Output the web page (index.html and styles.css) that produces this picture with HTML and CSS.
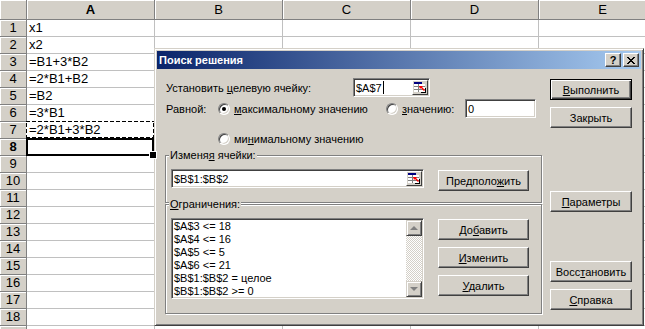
FILE: index.html
```html
<!DOCTYPE html>
<html lang="ru">
<head>
    <meta charset="UTF-8">
    <meta name="viewport" content="width=device-width, initial-scale=1.0">
    <title>Поиск решения</title>
    <link rel="stylesheet" href="styles.css">
</head>
<body>

    <div class="sheet">
        <div class="corner"></div>
        <div class="col-head active">A</div><div class="col-head">B</div><div class="col-head">C</div><div class="col-head">D</div><div class="col-head">E</div>

        <div class="row-head">1</div><div class="cell">x1</div><div class="cell"></div><div class="cell"></div><div class="cell"></div><div class="cell"></div>
        <div class="row-head">2</div><div class="cell">x2</div><div class="cell"></div><div class="cell"></div><div class="cell"></div><div class="cell"></div>
        <div class="row-head">3</div><div class="cell">=B1+3*B2</div><div class="cell"></div><div class="cell"></div><div class="cell"></div><div class="cell"></div>
        <div class="row-head">4</div><div class="cell">=2*B1+B2</div><div class="cell"></div><div class="cell"></div><div class="cell"></div><div class="cell"></div>
        <div class="row-head">5</div><div class="cell">=B2</div><div class="cell"></div><div class="cell"></div><div class="cell"></div><div class="cell"></div>
        <div class="row-head">6</div><div class="cell">=3*B1</div><div class="cell"></div><div class="cell"></div><div class="cell"></div><div class="cell"></div>
        <div class="row-head">7</div><div class="cell copied">=2*B1+3*B2</div><div class="cell"></div><div class="cell"></div><div class="cell"></div><div class="cell"></div>
        <div class="row-head active">8</div><div class="cell selected"></div><div class="cell"></div><div class="cell"></div><div class="cell"></div><div class="cell"></div>
        <div class="row-head">9</div><div class="cell"></div><div class="cell"></div><div class="cell"></div><div class="cell"></div><div class="cell"></div>
        <div class="row-head">10</div><div class="cell"></div><div class="cell"></div><div class="cell"></div><div class="cell"></div><div class="cell"></div>
        <div class="row-head">11</div><div class="cell"></div><div class="cell"></div><div class="cell"></div><div class="cell"></div><div class="cell"></div>
        <div class="row-head">12</div><div class="cell"></div><div class="cell"></div><div class="cell"></div><div class="cell"></div><div class="cell"></div>
        <div class="row-head">13</div><div class="cell"></div><div class="cell"></div><div class="cell"></div><div class="cell"></div><div class="cell"></div>
        <div class="row-head">14</div><div class="cell"></div><div class="cell"></div><div class="cell"></div><div class="cell"></div><div class="cell"></div>
        <div class="row-head">15</div><div class="cell"></div><div class="cell"></div><div class="cell"></div><div class="cell"></div><div class="cell"></div>
        <div class="row-head">16</div><div class="cell"></div><div class="cell"></div><div class="cell"></div><div class="cell"></div><div class="cell"></div>
        <div class="row-head">17</div><div class="cell"></div><div class="cell"></div><div class="cell"></div><div class="cell"></div><div class="cell"></div>
        <div class="row-head">18</div><div class="cell"></div><div class="cell"></div><div class="cell"></div><div class="cell"></div><div class="cell"></div>
        <div class="row-head"></div><div class="cell"></div><div class="cell"></div><div class="cell"></div><div class="cell"></div><div class="cell"></div>
    </div>

    <div class="dialog">
        <div class="titlebar">
            <span class="title">Поиск решения</span>
            <div class="caption-btns">
                <span class="cap-btn">?</span>
                <span class="cap-btn">
                    <svg width="8" height="7" viewBox="0 0 8 7"><path d="M0 0h2v1H0zM6 0h2v1H6zM1 1h2v1H1zM5 1h2v1H5zM2 2h4v1H2zM3 3h2v1H3zM2 4h4v1H2zM1 5h2v1H1zM5 5h2v1H5zM0 6h2v1H0zM6 6h2v1H6z" fill="#000"/></svg>
                </span>
            </div>
        </div>

        <div class="dlg-body">
            <div class="main">
                <div class="row target">
                    <span class="lbl">Установить <u>ц</u>елевую ячейку:</span>
                    <div class="field ref">
                        <span>$A$7</span><span class="caret"></span>
                        <span class="picker">
                            <svg width="14" height="13" viewBox="0 0 14 13">
                                <rect x="1" y="1" width="8" height="2" fill="#000080"/>
                                <rect x="1" y="3" width="11" height="8" fill="#fff"/>
                                <path d="M1 5.5h11M1 8.5h11M5.5 3v8" stroke="#808080"/>
                                <path d="M6 5h4l-1 1 3 3-1 1-3-3-1 1z" fill="#f00"/>
                                <path d="M8 11.5h5M12.5 7v5" stroke="#000"/>
                            </svg>
                        </span>
                    </div>
                </div>

                <div class="row equal">
                    <span class="lbl">Равной:</span>
                    <span class="opt opt-max"><span class="radio on"></span><span><u>м</u>аксимальному значению</span></span>
                    <span class="opt opt-val"><span class="radio"></span><span><u>з</u>начению:</span></span>
                    <div class="field value">0</div>
                </div>

                <div class="row minimum">
                    <span class="opt"><span class="radio"></span><span>ми<u>н</u>имальному значению</span></span>
                </div>

                <div class="group changing">
                    <div class="group-title">Изменя<u>я</u> ячейки:</div>
                    <div class="group-row">
                        <div class="field cells">
                            <span>$B$1:$B$2</span>
                            <span class="picker">
                                <svg width="14" height="13" viewBox="0 0 14 13">
                                    <rect x="1" y="1" width="8" height="2" fill="#000080"/>
                                    <rect x="1" y="3" width="11" height="8" fill="#fff"/>
                                    <path d="M1 5.5h11M1 8.5h11M5.5 3v8" stroke="#808080"/>
                                    <path d="M6 5h4l-1 1 3 3-1 1-3-3-1 1z" fill="#f00"/>
                                    <path d="M8 11.5h5M12.5 7v5" stroke="#000"/>
                                </svg>
                            </span>
                        </div>
                        <div class="btn-col">
                            <button class="btn">Предполо<u>ж</u>ить</button>
                        </div>
                    </div>
                </div>

                <div class="group limits">
                    <div class="group-title"><u>О</u>граничения:</div>
                    <div class="group-row">
                        <div class="listbox">
                            <ul class="items">
                                <li>$A$3 &lt;= 18</li>
                                <li>$A$4 &lt;= 16</li>
                                <li>$A$5 &lt;= 5</li>
                                <li>$A$6 &lt;= 21</li>
                                <li>$B$1:$B$2 = целое</li>
                                <li>$B$1:$B$2 &gt;= 0</li>
                            </ul>
                            <div class="scrollbar">
                                <span class="sb-btn up"></span>
                                <span class="sb-track"></span>
                                <span class="sb-btn down"></span>
                            </div>
                        </div>
                        <div class="btn-col">
                            <button class="btn">До<u>б</u>авить</button>
                            <button class="btn"><u>И</u>зменить</button>
                            <button class="btn"><u>У</u>далить</button>
                        </div>
                    </div>
                </div>
            </div>

            <div class="side">
                <button class="btn default"><u>В</u>ыполнить</button>
                <button class="btn close">Закрыть</button>
                <button class="btn params"><u>П</u>араметры</button>
                <button class="btn restore">Восс<u>т</u>ановить</button>
                <button class="btn help"><u>С</u>правка</button>
            </div>
        </div>
    </div>

</body>
</html>
```

FILE: styles.css
```css
* {
    box-sizing: border-box;
}

body {
    margin: 0;
    width: 645px;
    height: 329px;
    overflow: hidden;
    position: relative;
    background: #fff;
    font-family: "Liberation Sans", Arial, sans-serif;
    color: #000;
}

/* spreadsheet */

.sheet {
    display: grid;
    grid-template-columns: 27px repeat(5, 128px);
    grid-template-rows: 20px;
    grid-auto-rows: 17px;
    font-size: 13px;
}

.corner,
.col-head,
.row-head {
    background: #d4d0c8;
    border-right: 1px solid #808080;
    border-bottom: 1px solid #808080;
    box-shadow: inset 1px 1px #fff;
    text-align: center;
}

.col-head {
    line-height: 19px;
}

.row-head {
    line-height: 16px;
}

.active {
    font-weight: bold;
}

.cell {
    position: relative;
    border-right: 1px solid #c0c0c0;
    border-bottom: 1px solid #c0c0c0;
    padding-left: 2px;
    line-height: 16px;
    white-space: nowrap;
}

.cell.copied::after {
    content: "";
    position: absolute;
    left: -1px;
    top: -1px;
    right: -1px;
    bottom: -1px;
    background:
        repeating-linear-gradient(90deg, #000 0 4px, #fff 4px 6px) left top / 100% 1px no-repeat,
        repeating-linear-gradient(90deg, #000 0 4px, #fff 4px 6px) left bottom / 100% 2px no-repeat,
        repeating-linear-gradient(0deg, #000 0 4px, #fff 4px 6px) left top / 1px 100% no-repeat,
        repeating-linear-gradient(0deg, #000 0 4px, #fff 4px 6px) right top / 2px 100% no-repeat;
}

.cell.selected::after {
    content: "";
    position: absolute;
    left: -1px;
    top: -1px;
    right: 0;
    bottom: -1px;
    border: 2px solid #000;
}

.cell.selected::before {
    content: "";
    position: absolute;
    right: -3px;
    bottom: -4px;
    width: 6px;
    height: 6px;
    background: #000;
    border: 1px solid #fff;
    z-index: 1;
}

/* dialog */

.dialog {
    position: absolute;
    left: 154px;
    top: 48px;
    width: 490px;
    height: 278px;
    padding: 2px;
    background: #d4d0c8;
    border: 1px solid;
    border-color: #d4d0c8 #404040 #404040 #d4d0c8;
    box-shadow: inset 1px 1px #fff, inset -1px -1px #808080;
    font-size: 11px;
}

.titlebar {
    height: 18px;
    display: flex;
    align-items: center;
    justify-content: space-between;
    padding: 0 2px 0 2px;
    background: linear-gradient(90deg, #0a246a, #a6caf0);
}

.title {
    color: #fff;
    font-weight: bold;
}

.caption-btns {
    display: flex;
    gap: 2px;
}

.cap-btn {
    width: 16px;
    height: 14px;
    display: flex;
    align-items: center;
    justify-content: center;
    background: #d4d0c8;
    border: 1px solid;
    border-color: #fff #404040 #404040 #fff;
    box-shadow: inset -1px -1px #808080;
    font-weight: bold;
    font-size: 11px;
    line-height: 1;
}

.dlg-body {
    display: flex;
    padding: 9px 8px 0 8px;
}

.main {
    width: 377px;
}

.side {
    width: 82px;
    margin-left: 8px;
    display: flex;
    flex-direction: column;
}

.row {
    display: flex;
    align-items: center;
    height: 19px;
    padding-left: 1px;
}

.target .lbl {
    width: 187px;
}

.equal {
    margin-top: 2px;
}

.equal .lbl {
    width: 52px;
}

.minimum {
    margin-top: 11px;
    padding-left: 53px;
}

.opt {
    display: flex;
    align-items: center;
}

.opt-max {
    width: 168px;
}

.opt-val {
    width: 79px;
}

.radio {
    position: relative;
    flex: none;
    width: 12px;
    height: 12px;
    margin-right: 4px;
    border-radius: 50%;
    background: #fff;
    border: 1px solid;
    border-color: #808080 #fff #fff #808080;
    box-shadow: inset 1px 1px #404040, inset -1px -1px #d4d0c8;
}

.radio.on::after {
    content: "";
    position: absolute;
    left: 3px;
    top: 3px;
    width: 4px;
    height: 4px;
    border-radius: 50%;
    background: #000;
}

.field {
    height: 19px;
    display: flex;
    align-items: center;
    padding: 1px 1px 1px 2px;
    background: #fff;
    border: 1px solid;
    border-color: #808080 #fff #fff #808080;
    box-shadow: inset 1px 1px #404040, inset -1px -1px #d4d0c8;
    white-space: nowrap;
}

.field.ref {
    width: 77px;
}

.field.value {
    width: 71px;
}

.field.cells {
    width: 253px;
}

.caret {
    width: 1px;
    height: 13px;
    margin-left: 1px;
    background: #000;
}

.picker {
    margin-left: auto;
    width: 16px;
    height: 15px;
    display: flex;
    align-items: center;
    justify-content: center;
    background: #d4d0c8;
    border: 1px solid;
    border-color: #fff #404040 #404040 #fff;
}

.picker svg {
    display: block;
}

.group {
    border: 1px solid #808080;
    box-shadow: 1px 1px #fff, inset 1px 1px #fff;
    padding-left: 5px;
}

.changing {
    margin-top: 7px;
    padding-bottom: 11px;
}

.limits {
    margin-top: 1px;
    padding-bottom: 14px;
}

.group-title {
    width: max-content;
    margin-top: -7px;
    margin-left: -2px;
    padding: 0 1px;
    background: #d4d0c8;
    line-height: 13px;
}

.group-row {
    display: flex;
    margin-top: 7px;
}

.btn-col {
    display: flex;
    flex-direction: column;
    margin-left: 14px;
    padding-top: 1px;
    gap: 7px;
}

.listbox {
    width: 253px;
    height: 81px;
    display: flex;
    padding: 1px;
    background: #fff;
    border: 1px solid;
    border-color: #808080 #fff #fff #808080;
    box-shadow: inset 1px 1px #404040, inset -1px -1px #d4d0c8;
}

.items {
    flex: 1;
    list-style: none;
    margin: 0;
    padding: 0 0 0 1px;
    line-height: 13px;
}

.scrollbar {
    width: 16px;
    display: flex;
    flex-direction: column;
}

.sb-btn {
    height: 16px;
    display: flex;
    align-items: center;
    justify-content: center;
    background: #d4d0c8;
    border: 1px solid;
    border-color: #d4d0c8 #404040 #404040 #d4d0c8;
    box-shadow: inset 1px 1px #fff, inset -1px -1px #808080;
}

.sb-btn.up::after {
    content: "";
    border-left: 4px solid transparent;
    border-right: 4px solid transparent;
    border-bottom: 4px solid #808080;
}

.sb-btn.down::after {
    content: "";
    border-left: 4px solid transparent;
    border-right: 4px solid transparent;
    border-top: 4px solid #808080;
}

.sb-track {
    flex: 1;
    background: repeating-conic-gradient(#fff 0 25%, #d4d0c8 0 50%) 0 0 / 2px 2px;
}

.btn {
    display: block;
    width: 91px;
    height: 21px;
    padding: 0;
    font: inherit;
    font-size: 11px;
    color: #000;
    text-align: center;
    background: #d4d0c8;
    border: 1px solid;
    border-color: #fff #404040 #404040 #fff;
    box-shadow: inset -1px -1px #808080;
}

.side .btn {
    width: 82px;
}

.btn.default {
    margin-top: 1px;
    border-color: #000;
    box-shadow: inset 1px 1px #fff, inset -1px -1px #404040, inset -2px -2px #808080;
}

.btn.close {
    margin-top: 7px;
}

.btn.params {
    margin-top: 63px;
}

.btn.restore {
    margin-top: 49px;
}

.btn.help {
    margin-top: 7px;
}
```
